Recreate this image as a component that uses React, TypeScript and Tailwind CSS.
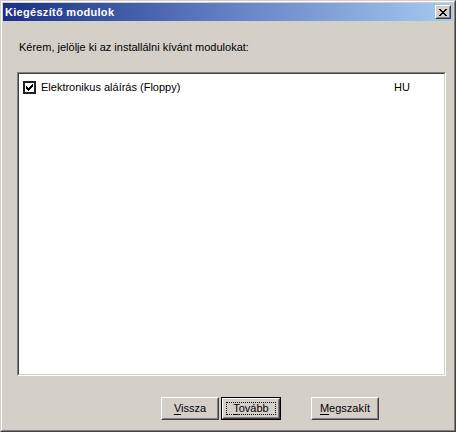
import React from 'react';

const font = { fontFamily: '"Liberation Sans", Arial, sans-serif' };

// underlined access key like a classic Windows button
const Key: React.FC<{ k: string; rest: string }> = ({ k, rest }) => (
  <span>
    <span className="underline underline-offset-[2px]">{k}</span>
    {rest}
  </span>
);

const RaisedButton: React.FC<{ width: string; children: React.ReactNode; isDefault?: boolean }> = ({
  width,
  children,
  isDefault,
}) => {
  const face = (
    <div className="h-full border border-white border-r-[#404040] border-b-[#404040]">
      <div className="h-full border border-[#d4d0c8] border-r-[#808080] border-b-[#808080] flex items-center justify-center p-[2px]">
        {isDefault ? (
          <div className="w-full h-full border border-dotted border-black flex items-center justify-center">
            {children}
          </div>
        ) : (
          children
        )}
      </div>
    </div>
  );
  return (
    <div className={`${width} h-[23px] text-[11px] text-black leading-[13px]`}>
      {isDefault ? <div className="h-full border border-black">{face}</div> : face}
    </div>
  );
};

const CloseButton: React.FC = () => (
  <div className="w-[16px] h-[14px] bg-[#d4d0c8] border border-white border-r-[#404040] border-b-[#404040]">
    <div className="w-full h-full border border-[#d4d0c8] border-r-[#808080] border-b-[#808080] flex items-center justify-center">
      <svg width="8" height="7" viewBox="0 0 8 7" shapeRendering="crispEdges">
        <path
          fill="#000"
          d="M0 0h2v1H0zM6 0h2v1H6zM1 1h2v1H1zM5 1h2v1H5zM2 2h4v1H2zM3 3h2v1H3zM2 4h4v1H2zM1 5h2v1H1zM5 5h2v1H5zM0 6h2v1H0zM6 6h2v1H6z"
        />
      </svg>
    </div>
  </div>
);

export default function App() {
  return (
    <div
      className="w-[456px] h-[432px] bg-[#d4d0c8] border border-[#d4d0c8] border-r-[#404040] border-b-[#404040]"
      style={font}
    >
      <div className="h-full border border-white border-r-[#808080] border-b-[#808080] p-px flex flex-col">
        {/* Title bar */}
        <div className="h-[18px] shrink-0 flex items-center justify-between pl-[2px] pr-[2px] bg-gradient-to-r from-[#1c2f85] via-[#6480c4] to-[#a6caf0]">
          <span className="text-white font-bold text-[11px] leading-[13px] tracking-[0.3px]">Kiegészítő modulok</span>
          <CloseButton />
        </div>

        {/* Body */}
        <div className="flex-1 flex flex-col pt-[20px]">
          <div className="pl-[16px] text-[11px] leading-[13px] text-black">
            Kérem, jelölje ki az installálni kívánt modulokat:
          </div>

          <div className="ml-[14px] mt-[18px] w-[429px] h-[304px] border border-[#808080] border-r-white border-b-white">
            <div className="h-full border border-[#404040] border-r-[#d4d0c8] border-b-[#d4d0c8] bg-white">
              <div className="flex items-center pl-[4px] pt-[7px] text-[11px] leading-[13px] text-black">
                <div className="w-[13px] h-[13px] border-2 border-[#202020] bg-white flex items-center justify-center">
                  <svg width="7" height="7" viewBox="0 0 7 7" shapeRendering="crispEdges">
                    <path
                      fill="#000"
                      d="M6 0h1v1H6zM5 1h2v1H5zM0 2h1v1H0zM4 2h3v1H4zM0 3h2v1H0zM3 3h3v1H3zM0 4h5v1H0zM1 5h3v1H1zM2 6h1v1H2z"
                    />
                  </svg>
                </div>
                <span className="ml-[5px] w-[353px]">Elektronikus aláírás (Floppy)</span>
                <span>HU</span>
              </div>
            </div>
          </div>

          <div className="flex mt-[21px] ml-[158px]">
            <RaisedButton width="w-[58px]">
              <Key k="V" rest="issza" />
            </RaisedButton>
            <div className="ml-[2px]">
              <RaisedButton width="w-[60px]" isDefault>
                <Key k="T" rest="ovább" />
              </RaisedButton>
            </div>
            <div className="ml-[30px]">
              <RaisedButton width="w-[68px]">
                <Key k="M" rest="egszakít" />
              </RaisedButton>
            </div>
          </div>
        </div>
      </div>
    </div>
  );
}
